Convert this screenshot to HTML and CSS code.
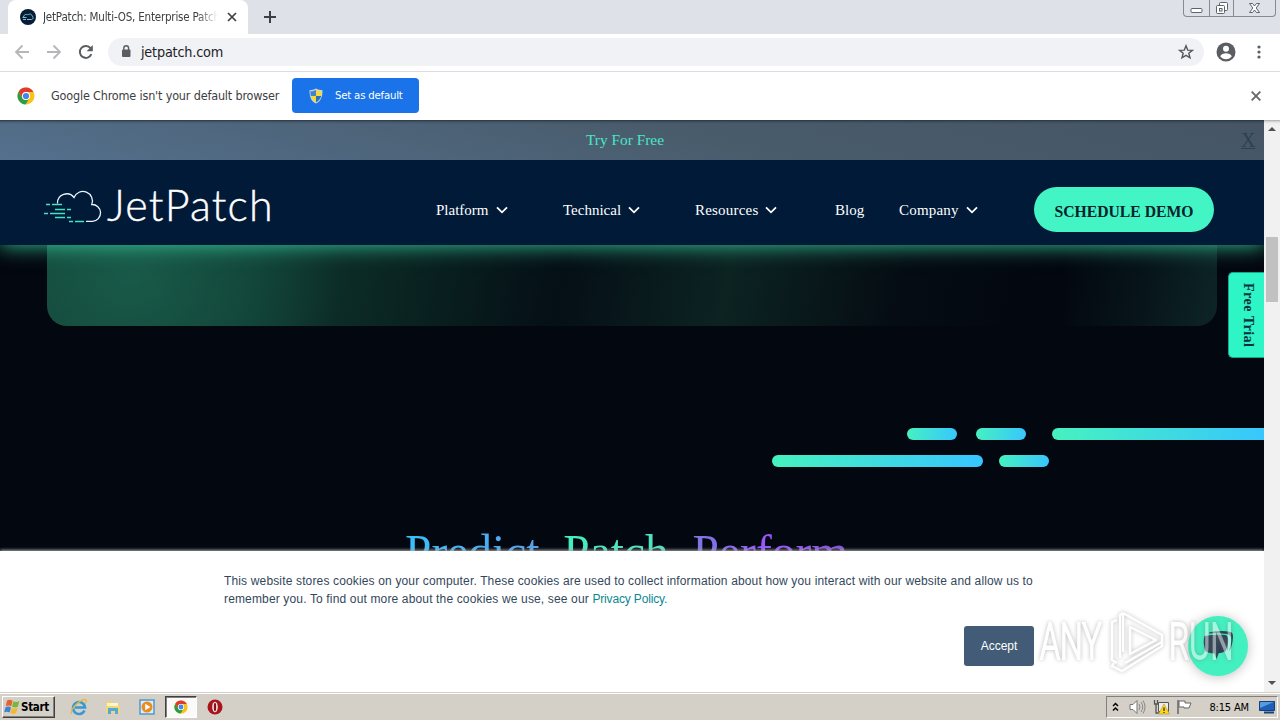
FILE: index.html
```html
<!doctype html>
<html lang="en">
<head>
<meta charset="utf-8">
<title>JetPatch: Multi-OS, Enterprise Patch</title>
<link rel="stylesheet" href="styles.css">
</head>
<body>
<svg width="0" height="0" class="defs">
	<symbol id="chrome" viewBox="0 0 18 18">
		<circle cx="9" cy="9" r="8.5" fill="#fbc116"/>
		<path d="M1.6 4.8A8.5 8.5 0 0 1 16.4 5H9a4 4 0 0 0-3.6 5.8z" fill="#df3a2f"/>
		<path d="M1.6 4.8A8.5 8.5 0 0 0 8.5 17.5l3.8-6.2a4 4 0 0 1-6.9-.4z" fill="#2a9d4a"/>
		<circle cx="9" cy="9" r="4" fill="#fff"/>
		<circle cx="9" cy="9" r="3.1" fill="#4086ee"/>
	</symbol>
	<symbol id="chevron" viewBox="0 0 12 8">
		<path d="M1 1.3l5 5 5-5" fill="none" stroke="#fff" stroke-width="1.8"/>
	</symbol>
</svg>

<div class="tabstrip">
	<div class="tab">
		<svg class="favicon" width="16" height="16" viewBox="0 0 16 16">
			<circle cx="8" cy="8" r="8" fill="#071c36"/>
			<path d="M3.500 8C4 5 7 5 8 6c2-2 4-.5 4 1 2 1 1 3.500-.5 3.500H7M2.500 8.500h4M3 10.500h3" fill="none" stroke="#7cc5cb"/>
		</svg>
		<span class="tabTitle">JetPatch: Multi-OS, Enterprise Patch</span>
		<svg width="10" height="10" viewBox="0 0 10 10"><path d="M1 1l8 8M9 1l-8 8" stroke="#3c4043" stroke-width="1.7"/></svg>
	</div>
	<svg class="newTab" width="12" height="12" viewBox="0 0 12 12"><path d="M6 0v12M0 6h12" stroke="#3c4043" stroke-width="2"/></svg>
	<div class="windowButtons">
		<div class="minimize"><svg width="13" height="17" viewBox="0 0 13 17"><rect x="1" y="8.500" width="11" height="4" rx="1" fill="#fff" stroke="#5d626b"/></svg></div>
		<div class="restore"><svg width="14" height="17" viewBox="0 0 14 17"><g fill="#fff" stroke="#5d626b"><rect x="4.500" y="2.500" width="8" height="8" rx="1"/><rect x="1.500" y="5.500" width="8" height="8" rx="1"/><rect x="4.500" y="8.500" width="2.500" height="2.500"/></g></svg></div>
		<div class="close"><svg width="13" height="17" viewBox="0 0 13 17"><path d="M1.500 3.500h3l2 2.500 2-2.500h3l-3.300 4.500 3.300 4.500h-3l-2-2.500-2 2.500h-3l3.300-4.500z" fill="#fff" stroke="#5d626b"/></svg></div>
	</div>
</div>

<div class="toolbar">
	<svg width="16" height="16" viewBox="0 0 16 16"><path d="M15 8H2M8.500 1.500L2 8l6.500 6.500" fill="none" stroke="#b4b6b9" stroke-width="1.8"/></svg>
	<svg width="16" height="16" viewBox="0 0 16 16"><path d="M1 8h13M7.500 1.500L14 8l-6.500 6.500" fill="none" stroke="#b4b6b9" stroke-width="1.8"/></svg>
	<svg width="16" height="16" viewBox="0 0 16 16"><path d="M13.400 10.200A6 6 0 1 1 12.600 4.200" fill="none" stroke="#5a5d61" stroke-width="2"/><path d="M14.800 1v6.200H8.600z" fill="#5a5d61"/></svg>
	<div class="omnibox">
		<svg width="10" height="13" viewBox="0 0 10 13"><rect x="1" y="4.500" width="8.500" height="7.500" rx="1" fill="#5a5d61"/><path d="M2.800 5V3.200a2.400 2.400 0 0 1 4.800 0V5" fill="none" stroke="#5a5d61" stroke-width="1.400"/></svg>
		<span class="url">jetpatch.com</span>
		<svg class="star" width="16" height="16" viewBox="0 0 16 16"><path d="M8 1.800l1.700 4.300 4.600.3-3.500 2.900 1.200 4.500L8 11.300l-4 2.500 1.200-4.500L1.700 6.400l4.600-.3z" fill="none" stroke="#55585c" stroke-width="1.400"/></svg>
	</div>
	<svg class="profile" width="20" height="20" viewBox="0 0 20 20"><circle cx="10" cy="10" r="9.500" fill="#5a5d61"/><circle cx="10" cy="6.800" r="3" fill="#fff"/><path d="M4.200 14.200c1.800-4 9.800-4 11.600 0-2.700 4-8.900 4-11.600 0z" fill="#fff"/></svg>
	<svg class="menu" width="4" height="14" viewBox="0 0 4 14"><g fill="#5a5d61"><circle cx="2" cy="2" r="1.600"/><circle cx="2" cy="7" r="1.600"/><circle cx="2" cy="12" r="1.600"/></g></svg>
</div>

<div class="infobar">
	<svg width="18" height="18"><use href="#chrome"/></svg>
	<span class="infoText">Google Chrome isn't your default browser</span>
	<div class="defaultButton">
		<svg width="16" height="16" viewBox="0 0 16 16">
			<path d="M8 .5c2 1.300 4 1.700 6.500 1.700 0 6-1 10.500-6.500 13.300C2.500 12.700 1.500 8.200 1.500 2.200 4 2.200 6 1.800 8 .5z" fill="#c9d6dc"/>
			<path d="M8 2v6H2.800c-.3-1.500-.4-3-.4-4.800C4.500 3.200 6 3 8 2z" fill="#3e84cf"/>
			<path d="M8 2v6h5.200c.3-1.500.4-3 .4-4.800C11.500 3.200 10 3 8 2z" fill="#f7d83a"/>
			<path d="M8 8v6.500C5.500 13 3.500 11 2.800 8z" fill="#f7d83a"/>
			<path d="M8 8v6.500c2.500-1.500 4.500-3.500 5.200-6.500z" fill="#2c6fbd"/>
		</svg>
		<span>Set as default</span>
	</div>
	<svg class="infoClose" width="10" height="10" viewBox="0 0 10 10"><path d="M.7.7l8.600 8.600M9.300.7L.7 9.300" stroke="#66696d" stroke-width="1.900"/></svg>
</div>

<div class="viewport">
	<div class="page">
		<div class="promo">
			<a class="promoLink">Try For Free</a>
			<span class="promoClose">X</span>
		</div>
		<div class="header">
			<div class="logo">
				<svg width="60" height="36" viewBox="0 0 60 36">
					<path d="M14.500 15.500A9.200 9.200 0 0 1 31 9.500A9.300 9.300 0 0 1 48.800 16.500A8.400 8.400 0 0 1 49.500 33.300H43" fill="none" stroke="#e9f6ff" stroke-width="1.300"/>
					<path d="M3 16.500h4M9 16.500h10M12 21.500h10M24 21.500h4M1 25.500h4M7 25.500h15M12 29.500h10M24 29.500h4M26 33.500h4M32 33.500h9" stroke="#45e3c2" stroke-width="1.500"/>
				</svg>
				<span class="logoText">JetPatch</span>
			</div>
			<div class="nav">
				<div class="navItem">Platform <svg width="12" height="8"><use href="#chevron"/></svg></div>
				<div class="navItem">Technical <svg width="12" height="8"><use href="#chevron"/></svg></div>
				<div class="navItem resources">Resources <svg width="12" height="8"><use href="#chevron"/></svg></div>
				<div class="navItem">Blog</div>
				<div class="navItem company">Company <svg width="12" height="8"><use href="#chevron"/></svg></div>
			</div>
			<div class="demoButton">SCHEDULE DEMO</div>
		</div>
		<div class="content">
			<div class="card"></div>
			<div class="dashes">
				<div class="dashRow top"><i class="dash"></i><i class="dash"></i><i class="dash long"></i></div>
				<div class="dashRow"><i class="dash long"></i><i class="dash"></i></div>
			</div>
			<div class="headline"><span class="predict">Predict.</span> <span class="patch">Patch.</span> <span class="perform">Perform.</span></div>
		</div>

		<div class="freeTrial">Free Trial</div>

		<div class="cookies">
			<div class="cookieText">This website stores cookies on your computer. These cookies are used to collect information about how you interact with our website and allow us to<br>remember you. To find out more about the cookies we use, see our <a>Privacy Policy.</a></div>
			<div class="acceptButton">Accept</div>
		</div>

		<div class="chat">
			<svg width="34" height="34" viewBox="0 0 34 34"><path d="M8 4.500V3.500Q19 1 30 3q2 1 2 5-.5 8-3 13l-1 .5q3-8 2-13.500-1-2.500-4-3-9-1-18-.5z" fill="#293e51"/><path d="M3.500 7q11.500-2.500 21-1 3 1 2.700 6-.5 7-2.500 10-3 1.800-7 2.200L15.500 30 13.500 24.500Q7 24 4.500 22 1.500 13 3.500 7z" fill="#293e51"/></svg>
		</div>

		<div class="watermark">
			<span class="wmAny">ANY</span>
			<svg width="56" height="64" viewBox="0 0 56 64"><path d="M9 10l-5 2v38l5 3M15 3v39M15 3l-3 2v43M15 3l39 22v7L17 53M22 17l26 13-26 14zM6 53l-2 3 10 5 40-25v-5" fill="none" stroke="#fff" stroke-width="2.400" stroke-linejoin="round"/></svg>
			<span class="wmRun">RUN</span>
		</div>
	</div>
	<div class="scrollbar">
		<svg width="16" height="16" viewBox="0 0 16 16"><path d="M4 11l4-4 4 4z" fill="#505050"/></svg>
		<div class="thumb"></div>
		<svg class="down" width="16" height="16" viewBox="0 0 16 16"><path d="M4 5l4 4 4-4z" fill="#505050"/></svg>
	</div>
</div>

<div class="taskbar">
	<div class="start">
		<svg width="16" height="16" viewBox="0 0 16 16"><path d="M3 1.500q3-1.500 5.500.2L7.300 7.300q-2.500-1.500-5.500-.2z" fill="#e9602d"/><path d="M9.300 2.200q2.500 1.500 6 0l-1.400 5.600q-3 1.500-5.800 0z" fill="#7ab53c"/><path d="M1.500 8.200q3-1.400 5.500.2l-1.300 5.200q-2.500-1.700-5.500-.3z" fill="#3d83cf"/><path d="M7.800 8.900q2.700 1.500 5.800.1l-1.400 5q-3 1.700-5.700 0z" fill="#f2b92e"/></svg>
		<span>Start</span>
	</div>
	<div class="quick"><svg width="18" height="18" viewBox="0 0 18 18"><path d="M14.500 12.500A6 6 0 1 1 15 9.500H5" fill="none" stroke="#3798d6" stroke-width="2.600"/><path d="M1.500 16C-.5 12 10 1 15.500 1.500q2 .8-.5 4" fill="none" stroke="#e5b93c" stroke-width="1.300"/></svg></div>
	<div class="quick"><svg width="16" height="16" viewBox="0 0 16 16"><path d="M1 2h5l1 2h7v10H1z" fill="#eed17a"/><path d="M2 4h11v3H2z" fill="#fff5c9"/><path d="M1 7h14v7H1z" fill="#f0d77c"/><path d="M3 15V9h10v6h-3v-3H6v3z" fill="#57a9d2"/></svg></div>
	<div class="quick"><svg width="16" height="16" viewBox="0 0 16 16"><path d="M1 1h14v14H1z" fill="#dceefa" stroke="#4d9bd0" stroke-width="1.500"/><circle cx="8" cy="8" r="5.500" fill="#ef8b1c"/><path d="M6.200 4.800v6.400L11.500 8z" fill="#fff"/></svg></div>
	<div class="quick active"><svg width="14" height="14"><use href="#chrome"/></svg></div>
	<div class="quick"><svg width="16" height="16" viewBox="0 0 16 16"><circle cx="8" cy="8" r="7.500" fill="#a9131b"/><ellipse cx="8" cy="8" rx="2.800" ry="5.200" fill="#f7e9e9"/><ellipse cx="8" cy="8" rx="1.200" ry="4.200" fill="#8a0f16"/></svg></div>
	<div class="tray">
		<svg width="7" height="10" viewBox="0 0 7 10"><path d="M1 4l2.500-2.500L6 4M1 8.500L3.500 6 6 8.500" fill="none" stroke="#000" stroke-width="1.500"/></svg>
		<svg class="speaker" width="17" height="16" viewBox="0 0 17 16"><path d="M1 5.500h3l4-4v13l-4-4H1z" fill="#fff" stroke="#777"/><path d="M10 5q2 3 0 6M12 3q3.500 5 0 10M14 1.500q4 6.500 0 13" fill="none" stroke="#888"/></svg>
		<svg class="network" width="17" height="16" viewBox="0 0 17 16"><path d="M5.500 3.500h10v9h-10z" fill="#e9edf0" stroke="#555"/><path d="M1.500 1v4h3V1M3 5v9h5" fill="none" stroke="#555" stroke-width="1.300"/><path d="M11 5l5.500 10h-11z" fill="#ffd51e" stroke="#a68a19" stroke-width=".5"/><path d="M11 8.500v3.500M11 13v1" stroke="#222" stroke-width="1.200"/></svg>
		<svg class="flag" width="17" height="16" viewBox="0 0 17 16"><path d="M2 1v14" stroke="#666" stroke-width="1.500"/><path d="M3 2h6v2h6l-2 5H8V8H3z" fill="#fff" stroke="#666"/></svg>
		<span class="clock">8:15 AM</span>
		<svg class="desktop" width="16" height="14" viewBox="0 0 16 14"><path d="M.5 1.500h15v9H.5z" fill="#1d5fb8" stroke="#173e77"/><path d="M1 2h14L1 8z" fill="#5a9be0"/><path d="M5 12.500h10" stroke="#1c4275" stroke-width="2"/></svg>
	</div>
</div>
</body>
</html>
```
FILE: styles.css
```css
* {
	box-sizing: border-box;
}

body {
	margin: 0;
	width: 1280px;
	height: 720px;
	overflow: hidden;
	display: flex;
	flex-direction: column;
	font-family: "DejaVu Sans Condensed", "DejaVu Sans", sans-serif;
	font-size: 12px;
	background-color: #fff;
}

svg {
	display: block;
	flex: none;
}

.defs {
	position: absolute;
}

/* browser chrome */

.tabstrip {
	display: flex;
	height: 34px;
	padding-left: 8px;
	background-color: #dee1e8;
}

.tab {
	display: flex;
	align-items: center;
	width: 240px;
	padding: 0 11px 0 12px;
	border-radius: 8px 8px 0 0;
	background-color: #fff;
}

.tabTitle {
	width: 175px;
	margin: 0 9px 0 7px;
	overflow: hidden;
	white-space: nowrap;
	font-size: 11.5px;
	letter-spacing: -0.2px;
	color: #3c4043;
	-webkit-mask-image: linear-gradient(to right, #000 88%, transparent);
	mask-image: linear-gradient(to right, #000 88%, transparent);
}

.newTab {
	margin: 11px 0 0 16px;
}

.windowButtons {
	display: flex;
	width: 93px;
	height: 17px;
	margin: 0 4px 0 auto;
	border: 1px solid #858a93;
	border-top: none;
	border-radius: 0 0 4px 4px;
}

.windowButtons div {
	display: flex;
	justify-content: center;
	width: 25px;
	overflow: hidden;
}

.windowButtons .restore {
	border: solid #858a93;
	border-width: 0 1px;
}

.windowButtons .close {
	flex: 1;
}

.toolbar {
	display: flex;
	align-items: center;
	gap: 16px;
	height: 38px;
	padding: 0 19px 2px 14px;
	border-bottom: 1px solid #dadce0;
}

.omnibox {
	display: flex;
	align-items: center;
	flex: 1;
	height: 28px;
	margin-left: -2px;
	margin-right: -4px;
	padding: 0 10px 0 13px;
	border-radius: 14px;
	background-color: #f0f2f5;
}

.url {
	margin-left: 10px;
	font-size: 14.3px;
	letter-spacing: -0.2px;
	color: #202124;
}

.star {
	margin-left: auto;
}

.profile {
	margin-right: 5px;
}

.infobar {
	display: flex;
	align-items: center;
	height: 48px;
	padding: 0 19px 1px 17px;
}

.infoText {
	width: 241px;
	margin-left: 16px;
	white-space: nowrap;
	font-size: 12.5px;
	letter-spacing: -0.17px;
	color: #3c4043;
}

.defaultButton {
	display: flex;
	align-items: center;
	gap: 11px;
	width: 127px;
	height: 35px;
	padding-left: 16px;
	border-radius: 4px;
	font-size: 11.3px;
	letter-spacing: -0.2px;
	color: #fff;
	background-color: #1a73e8;
}

.infoClose {
	margin-left: auto;
}

/* web page */

.viewport {
	display: flex;
	height: 572px;
}

.page {
	position: relative;
	display: flex;
	flex-direction: column;
	width: 1264px;
	overflow: hidden;
	font-family: "Liberation Serif", serif;
	background-color: #03070f;
}

.promo {
	position: relative;
	z-index: 2;
	display: flex;
	align-items: center;
	justify-content: flex-end;
	height: 40px;
	padding-right: 9px;
	background: linear-gradient(15deg, #54708d, #495c6c 55%, #455565);
	box-shadow: inset 0 4px 3px -3px #222e38;
}

.promoLink {
	margin-right: 577px;
	font-size: 15.4px;
	color: #48e6c6;
}

.promoClose {
	width: 14px;
	font-size: 20px;
	color: #2b4152;
	text-decoration: underline;
	text-decoration-thickness: 1px;
}

.header {
	position: relative;
	z-index: 1;
	display: flex;
	align-items: center;
	height: 85px;
	padding-right: 50px;
	background-color: #001a38;
	box-shadow: 0 0 20px #36c99d;
}

.logo {
	display: flex;
	align-items: center;
	width: 436px;
	padding: 6px 0 0 43px;
}

.logoText {
	margin: -2px 0 0 4px;
	font-family: Lato, sans-serif;
	font-weight: 300;
	font-size: 43px;
	line-height: 48px;
	letter-spacing: 1.2px;
	color: #fff;
	-webkit-text-stroke: 0.4px #fff;
}

.nav {
	display: grid;
	grid-template-columns: 127px 132px 140px 64px 79px;
	padding-top: 15px;
	font-size: 15px;
	color: #fff;
}

.navItem {
	display: flex;
	align-items: center;
	gap: 7px;
}

.navItem.resources, .navItem.company {
	letter-spacing: 0.2px;
}

.demoButton {
	width: 180px;
	height: 45px;
	margin: 14px 0 0 auto;
	border-radius: 23px;
	font-size: 15.7px;
	font-weight: bold;
	line-height: 49px;
	text-align: center;
	color: #08212a;
	background-color: #43f5c5;
}

.card {
	width: 1170px;
	height: 81px;
	margin: 0 auto;
	border-radius: 0 0 20px 20px;
	background:
		radial-gradient(ellipse 210px 190px at 85px 30px, rgba(32,116,91,0.55), rgba(27,103,80,0.45) 40%, transparent),
		linear-gradient(100deg, #123c34, #0f3730 18%, #0b2824 28%, #050f16 44%, #0c2322 58%, #050c13 73%, #03070f 86%, #07141a 93%, #0d2526);
}

.dashes {
	display: flex;
	flex-direction: column;
	gap: 15px;
	margin-top: 102px;
	padding-left: 772px;
}

.dashRow {
	display: flex;
	gap: 16px;
}

.dashRow.top {
	gap: 19px;
	padding-left: 135px;
}

.dash {
	flex: none;
	width: 50px;
	height: 12px;
	border-radius: 6px;
	background: linear-gradient(100deg, #46f2bf, #37c5ff);
}

.dash.long {
	width: 211px;
}

/* runs off the right edge of the page */
.top .long {
	width: 220px;
	margin-left: 7px;
}

.headline {
	margin: 57px 0 0 405px;
	white-space: nowrap;
	font-size: 47.5px;
	line-height: 56px;
}

.headline span {
	color: transparent;
	-webkit-background-clip: text;
	background-clip: text;
}

.headline .predict {
	background-image: linear-gradient(to right, #37c0fb, #5a9fe8);
}

.headline .patch {
	background-image: linear-gradient(to right, #43efc0, #56dcc0);
}

.headline .perform {
	background-image: linear-gradient(to right, #7d78df, #9a55ff 45%, #8255d0);
}

.freeTrial {
	position: absolute;
	top: 152px;
	right: 0;
	width: 36px;
	height: 86px;
	border: 1px solid #14a78b;
	border-right: none;
	border-radius: 5px 0 0 5px;
	writing-mode: vertical-rl;
	font-size: 14px;
	font-weight: bold;
	line-height: 32px;
	letter-spacing: 0.5px;
	text-align: center;
	color: #082f3c;
	background-color: #2df5c5;
}

.cookies {
	position: absolute;
	left: 0;
	right: 0;
	bottom: 0;
	z-index: 2;
	height: 141px;
	padding: 21px 230px 0 224px;
	font-family: "Liberation Sans", sans-serif;
	font-size: 12px;
	line-height: 18px;
	color: #33475b;
	background-color: #fff;
	box-shadow: 0 -1px 3px #aaa;
}

.cookieText {
	white-space: nowrap;
	letter-spacing: 0.15px;
}

.cookieText a {
	letter-spacing: -0.15px;
	color: #0b8793;
}

.acceptButton {
	width: 70px;
	height: 40px;
	margin: 18px 0 0 auto;
	border-radius: 3px;
	line-height: 40px;
	text-align: center;
	color: #fff;
	background-color: #425b76;
}

.chat {
	position: absolute;
	right: 16px;
	bottom: 16px;
	z-index: 3;
	display: flex;
	align-items: center;
	justify-content: center;
	width: 60px;
	height: 60px;
	border-radius: 50%;
	background-color: #43f0bf;
	box-shadow: 0 1px 12px rgba(0,0,0,0.25);
}

.watermark {
	position: absolute;
	left: 1040px;
	bottom: 18px;
	z-index: 4;
	display: flex;
	align-items: center;
	gap: 5px;
	opacity: 0.5;
	font-family: Roboto, sans-serif;
	font-size: 50px;
	font-weight: 300;
	line-height: 60px;
	color: #fff;
	filter: drop-shadow(0 0 2px #777);
}

.wmAny, .wmRun {
	width: 63px;
	transform: scaleX(0.64);
	transform-origin: left;
	-webkit-text-stroke: 2px #fff;
}

.scrollbar {
	display: flex;
	flex-direction: column;
	width: 16px;
	background-color: #f1f1f1;
	box-shadow: inset 0 4px 3px -3px #999;
}

.thumb {
	width: 12px;
	height: 65px;
	margin: 101px 0 0 2px;
	background-color: #c1c1c1;
}

.down {
	margin-top: auto;
}

/* taskbar */

.taskbar {
	display: flex;
	align-items: center;
	height: 28px;
	padding: 1px 2px 0;
	border-top: 1px solid #d4d0c8;
	box-shadow: inset 0 1px #fff;
	font-size: 11px;
	background-color: #d4d0c8;
}

.start {
	display: flex;
	align-items: center;
	gap: 1px;
	width: 53px;
	height: 22px;
	margin-right: 8px;
	padding-left: 1px;
	border: 1px solid #404040;
	border-top-color: #fff;
	border-left-color: #fff;
	box-shadow: inset -1px -1px #808080;
	font-size: 11.5px;
	font-weight: bold;
	letter-spacing: -0.3px;
}

.quick {
	display: flex;
	align-items: center;
	justify-content: center;
	width: 32px;
	height: 22px;
	margin-right: 2px;
}

.quick.active {
	border: 1px solid #fff;
	border-top-color: #404040;
	border-left-color: #404040;
	box-shadow: inset 1px 1px #808080;
	background-color: #fbfaf8;
}

.tray {
	display: flex;
	align-items: center;
	width: 172px;
	height: 22px;
	margin-left: auto;
	padding: 0 2px 0 5px;
	border: 1px solid #fff;
	border-top-color: #808080;
	border-left-color: #808080;
}

.speaker {
	margin-left: 10px;
}

.network {
	margin-left: 7px;
}

.flag {
	margin-left: 6px;
}

.clock {
	margin-left: auto;
	letter-spacing: -0.15px;
}

.desktop {
	margin-left: 10px;
}
```
